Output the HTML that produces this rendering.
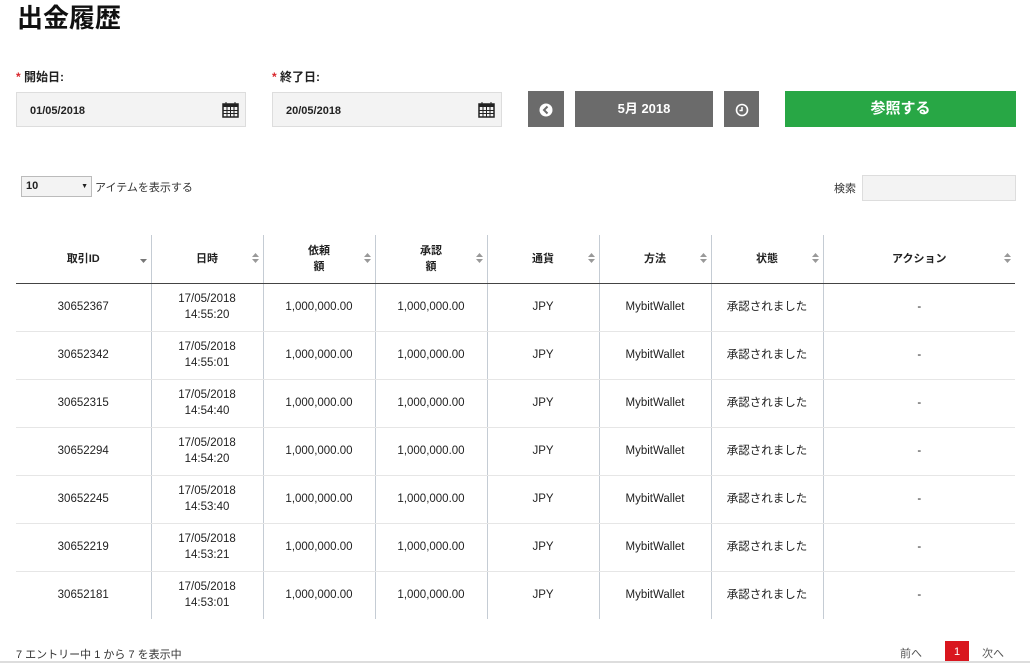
<!DOCTYPE html>
<html><head><meta charset="utf-8"><style>
*{box-sizing:border-box;margin:0;padding:0}
body{width:1030px;height:663px;overflow:hidden;background:#fff;font-family:"Liberation Sans","Noto Sans CJK JP",sans-serif;color:#222;position:relative}
.a{position:absolute}
h1{position:absolute;left:17px;top:2px;font-size:26px;font-weight:bold;color:#111;line-height:32px}
.lbl{font-size:12px;font-weight:bold;top:68px}
.lbl b{color:#d9262c}
.inp{height:35px;background:#f3f3f3;border:1px solid #ddd;font-size:11px;font-weight:bold;padding:2px 0 0 13px;line-height:33px;top:92px}
.btn{background:#6b6b6b;height:36px;top:91px;color:#fff;text-align:center;line-height:36px;font-weight:bold;font-size:13px}
table{position:absolute;left:16px;top:235px;width:999px;border-collapse:collapse;font-size:11.5px}
th{height:48px;font-weight:bold;font-size:11px;border-bottom:1.5px solid #444;position:relative;text-align:center;line-height:16px}
td{height:48px;text-align:center;border-bottom:1px solid #e6e6e6;line-height:16px}
th+th,td+td{border-left:1px solid #c5ccd4}
tr:last-child td{border-bottom:none}
.s{position:absolute;right:4px;top:17px;width:7px}
</style></head><body>
<h1>出金履歴</h1>
<div class="a lbl" style="left:16px"><b>*</b> 開始日:</div>
<div class="a lbl" style="left:272px"><b>*</b> 終了日:</div>
<div class="a inp" style="left:16px;width:230px">01/05/2018
<svg class="a" style="right:6px;top:8px" width="17" height="17" viewBox="0 0 17 17"><rect x="1" y="3" width="15" height="13" fill="none" stroke="#222" stroke-width="1.5"/><rect x="1" y="3" width="15" height="3" fill="#222"/><path d="M4 1v4M13 1v4M1 9.5h15M1 12.5h15M5 6v10M8.5 6v10M12 6v10" stroke="#222" stroke-width="1"/></svg></div>
<div class="a inp" style="left:272px;width:230px">20/05/2018
<svg class="a" style="right:6px;top:8px" width="17" height="17" viewBox="0 0 17 17"><rect x="1" y="3" width="15" height="13" fill="none" stroke="#222" stroke-width="1.5"/><rect x="1" y="3" width="15" height="3" fill="#222"/><path d="M4 1v4M13 1v4M1 9.5h15M1 12.5h15M5 6v10M8.5 6v10M12 6v10" stroke="#222" stroke-width="1"/></svg></div>
<div class="a btn" style="left:528px;width:36px"><svg width="14" height="14" viewBox="0 0 14 14" style="vertical-align:middle"><circle cx="7" cy="7" r="6.5" fill="#fff"/><path d="M8.5 3.5L5 7l3.5 3.5" stroke="#6b6b6b" stroke-width="2" fill="none"/></svg></div>
<div class="a btn" style="left:575px;width:138px">5月 2018</div>
<div class="a btn" style="left:724px;width:35px"><svg width="14" height="14" viewBox="0 0 14 14" style="vertical-align:middle"><circle cx="7" cy="7" r="5.5" fill="none" stroke="#fff" stroke-width="1.6"/><path d="M7 4v3.5H4.5" stroke="#fff" stroke-width="1.5" fill="none"/></svg></div>
<div class="a btn" style="left:785px;width:231px;background:#28a745;font-size:15px">参照する</div>
<div class="a" style="left:21px;top:176px;width:71px;height:21px;border:1px solid #bbb;background:#f3f3f3;font-size:11px;font-weight:bold;line-height:19px;padding-left:4px">10<span style="position:absolute;right:3px;font-size:7px">▼</span></div>
<div class="a" style="left:95px;top:179px;font-size:11px;color:#333">アイテムを表示する</div>
<div class="a" style="left:834px;top:180px;font-size:11px;color:#333">検索</div>
<div class="a" style="left:862px;top:175px;width:154px;height:26px;border:1px solid #ddd;background:#f3f3f3"></div>
<table>
<colgroup><col style="width:135px"><col style="width:112px"><col style="width:112px"><col style="width:112px"><col style="width:112px"><col style="width:112px"><col style="width:112px"><col style="width:192px"></colgroup>
<tr><th>取引ID<svg class="s" viewBox="0 0 7 12" height="12" style="top:19px"><path d="M0 5h7L3.5 9z" fill="#777"/></svg></th>
<th>日時<svg class="s" viewBox="0 0 7 12" height="12"><path d="M0 5L3.5 1 7 5zM0 7h7L3.5 11z" fill="#999"/></svg></th>
<th>依頼<br>額<svg class="s" viewBox="0 0 7 12" height="12"><path d="M0 5L3.5 1 7 5zM0 7h7L3.5 11z" fill="#999"/></svg></th>
<th>承認<br>額<svg class="s" viewBox="0 0 7 12" height="12"><path d="M0 5L3.5 1 7 5zM0 7h7L3.5 11z" fill="#999"/></svg></th>
<th>通貨<svg class="s" viewBox="0 0 7 12" height="12"><path d="M0 5L3.5 1 7 5zM0 7h7L3.5 11z" fill="#999"/></svg></th>
<th>方法<svg class="s" viewBox="0 0 7 12" height="12"><path d="M0 5L3.5 1 7 5zM0 7h7L3.5 11z" fill="#999"/></svg></th>
<th>状態<svg class="s" viewBox="0 0 7 12" height="12"><path d="M0 5L3.5 1 7 5zM0 7h7L3.5 11z" fill="#999"/></svg></th>
<th>アクション<svg class="s" viewBox="0 0 7 12" height="12"><path d="M0 5L3.5 1 7 5zM0 7h7L3.5 11z" fill="#999"/></svg></th></tr>
<tr><td>30652367</td><td>17/05/2018<br>14:55:20</td><td>1,000,000.00</td><td>1,000,000.00</td><td>JPY</td><td>MybitWallet</td><td>承認されました</td><td>-</td></tr>
<tr><td>30652342</td><td>17/05/2018<br>14:55:01</td><td>1,000,000.00</td><td>1,000,000.00</td><td>JPY</td><td>MybitWallet</td><td>承認されました</td><td>-</td></tr>
<tr><td>30652315</td><td>17/05/2018<br>14:54:40</td><td>1,000,000.00</td><td>1,000,000.00</td><td>JPY</td><td>MybitWallet</td><td>承認されました</td><td>-</td></tr>
<tr><td>30652294</td><td>17/05/2018<br>14:54:20</td><td>1,000,000.00</td><td>1,000,000.00</td><td>JPY</td><td>MybitWallet</td><td>承認されました</td><td>-</td></tr>
<tr><td>30652245</td><td>17/05/2018<br>14:53:40</td><td>1,000,000.00</td><td>1,000,000.00</td><td>JPY</td><td>MybitWallet</td><td>承認されました</td><td>-</td></tr>
<tr><td>30652219</td><td>17/05/2018<br>14:53:21</td><td>1,000,000.00</td><td>1,000,000.00</td><td>JPY</td><td>MybitWallet</td><td>承認されました</td><td>-</td></tr>
<tr><td>30652181</td><td>17/05/2018<br>14:53:01</td><td>1,000,000.00</td><td>1,000,000.00</td><td>JPY</td><td>MybitWallet</td><td>承認されました</td><td>-</td></tr>
</table>
<div class="a" style="left:16px;top:646px;font-size:11px;color:#333">7 エントリー中 1 から 7 を表示中</div>
<div class="a" style="left:900px;top:645px;font-size:11px;color:#555">前へ</div>
<div class="a" style="left:945px;top:641px;width:24px;height:22px;background:#d9161e;color:#fff;font-size:11px;text-align:center;line-height:22px">1</div>
<div class="a" style="left:982px;top:645px;font-size:11px;color:#555">次へ</div>
<div class="a" style="left:0;top:661px;width:1030px;height:2px;background:#ddd"></div>
</body></html>
